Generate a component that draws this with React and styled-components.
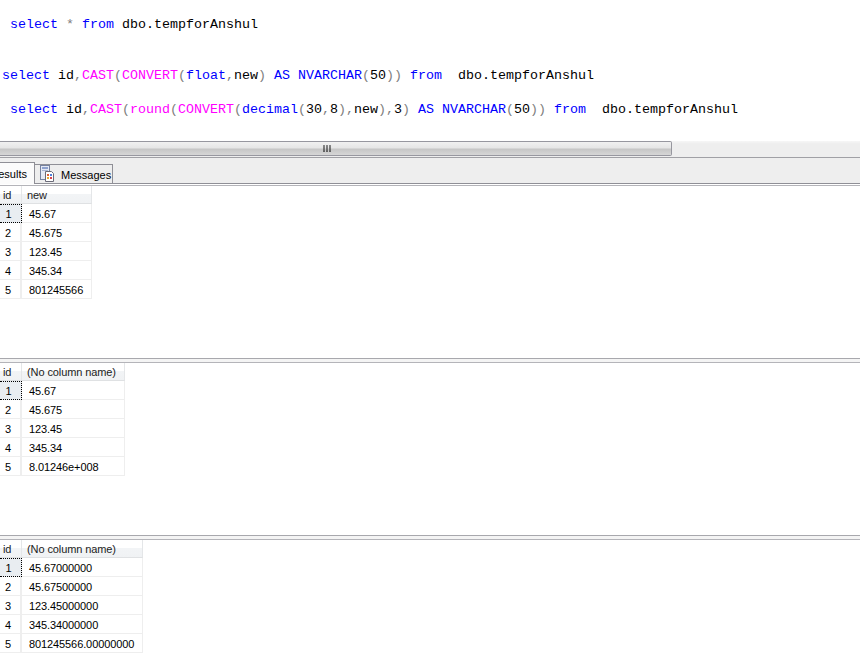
import React from 'react';
import styled, { createGlobalStyle } from 'styled-components';

const GlobalStyle = createGlobalStyle`
  html, body {
    margin: 0;
    padding: 0;
    background: #fff;
    overflow: hidden;
  }
`;

const Page = styled.div`
  width: 860px;
  height: 662px;
  overflow: hidden;
  display: flex;
  flex-direction: column;
  background: #fff;
`;

const Editor = styled.div`
  height: 141px;
  box-sizing: border-box;
  padding-top: 16px;
  font-family: "Liberation Mono", monospace;
  font-size: 13.33px;
  line-height: 17px;
  color: #000;
`;

const Line = styled.div`
  height: 17px;
  white-space: pre;
  padding-left: ${p => p.$indent}px;
  margin-bottom: ${p => p.$gap || 0}px;
`;

const Kw = styled.span`color: #0000ff;`;
const Fn = styled.span`color: #ff00ff;`;
const Op = styled.span`color: #808080;`;

const HScroll = styled.div`
  height: 16px;
  flex-shrink: 0;
  display: flex;
  align-items: flex-start;
  background: linear-gradient(#f6f6f6 0, #eeeeee 3px);
`;

const Thumb = styled.div`
  width: 672px;
  height: 15px;
  box-sizing: border-box;
  border: 1px solid #97979f;
  border-left: none;
  border-radius: 0 2px 2px 0;
  background: linear-gradient(#f1f1f1 0%, #e6e6e6 45%, #c6c6c6 55%, #d6d6d6 100%);
  display: flex;
  align-items: center;
  justify-content: center;
  gap: 1px;
  padding-right: 18px;
`;

const Grip = styled.span`
  width: 2px;
  height: 7px;
  background: linear-gradient(#8a8a8a, #5f5f5f);
`;

const TabStrip = styled.div`
  height: 27px;
  flex-shrink: 0;
  box-sizing: border-box;
  border-top: 1px solid #a0a0a5;
  border-bottom: 1px solid #8f8f96;
  background: #eeeeee;
  display: flex;
  align-items: flex-end;
  margin-bottom: 1px;
`;

const ResultsTab = styled.div`
  width: 35px;
  height: 22px;
  flex-shrink: 0;
  box-sizing: border-box;
  overflow: hidden;
  background: #fbfbfb;
  border: 1px solid #8f8f96;
  border-left: none;
  border-bottom: none;
  font: 11px "Liberation Sans", sans-serif;
  color: #000;
  display: flex;
  justify-content: flex-end;
  align-items: center;
  padding: 0 7px 0 0;
  position: relative;
  top: 1px;
  span {
    flex-shrink: 0;
  }
`;

const MessagesTab = styled.div`
  width: 78px;
  height: 19px;
  box-sizing: border-box;
  background: #eeeeee;
  border: 1px solid #8f8f96;
  border-left: none;
  border-bottom: none;
  font: 11px "Liberation Sans", sans-serif;
  color: #000;
  display: flex;
  align-items: center;
  padding: 2px 0 0 4px;
  gap: 6px;
  svg {
    flex-shrink: 0;
    margin-top: -3px;
  }
`;

const GridPane = styled.div`
  height: ${p => p.$height}px;
  flex-shrink: 0;
  box-sizing: border-box;
  border-top: 1px solid #b4b4b9;
`;

const Splitter = styled.div`
  height: 4px;
  flex-shrink: 0;
  box-sizing: border-box;
  border-top: 1px solid #a8a8ad;
  background: #f4f4f4;
`;

const Grid = styled.div`
  display: grid;
  grid-template-columns: 22px ${p => p.$col}px;
  width: ${p => p.$col + 22}px;
  font: 11px "Liberation Sans", sans-serif;
  letter-spacing: -0.1px;
  color: #000;
`;

const HeadCell = styled.div`
  height: 18px;
  box-sizing: border-box;
  padding: 1px 0 0 ${p => p.$left}px;
  line-height: 16px;
  white-space: nowrap;
  color: #1c1c1c;
  background: linear-gradient(#ffffff 0%, #ffffff 45%, #f2f4f6 50%, #f0f2f4 100%);
  border-right: 1px solid #e4e6e8;
  border-bottom: 1px solid #dfe1e3;
`;

const NumCell = styled.div`
  height: 19px;
  box-sizing: border-box;
  text-align: center;
  padding: 1px 4px 0 0;
  line-height: 18px;
  background: ${p => (p.$active ? '#e9edf1' : '#ffffff')};
  border-bottom: ${p => (p.$active ? '1px dotted #000' : '1px solid #eeeeee')};
  border-top: ${p => (p.$active ? '1px dotted #000' : 'none')};
  border-right: ${p => (p.$active ? '1px dotted #000' : '2px solid #eeeeee')};
  ${p => p.$active && 'line-height: 16px;'}
`;

const ValueCell = styled.div`
  height: 19px;
  box-sizing: border-box;
  padding: 1px 0 0 7px;
  line-height: 18px;
  white-space: nowrap;
  border-bottom: 1px solid #eeeeee;
  border-right: 1px solid #eeeeee;
`;

const MessagesIcon = () => (
  <svg width="16" height="17" viewBox="0 0 16 17">
    <rect x="1.5" y="0.5" width="9" height="14" fill="#e4e9f5" stroke="#76829f" />
    <rect x="3" y="2" width="6" height="2" fill="#8ea2cf" />
    <rect x="3" y="5" width="6" height="1" fill="#a9b6d4" />
    <path d="M6.5 6.5h6l2 2v8h-8z" fill="#fff" stroke="#6b6b78" />
    <rect x="8" y="9" width="2" height="2" fill="#e0603a" />
    <rect x="11" y="9" width="2" height="2" fill="#4f7fd9" />
    <rect x="8" y="12" width="2" height="2" fill="#e8a830" />
    <rect x="11" y="12" width="2" height="2" fill="#d9434f" />
  </svg>
);

const ResultGrid = ({ heading, col, rows }) => (
  <Grid $col={col}>
    <HeadCell $left={3}>id</HeadCell>
    <HeadCell $left={5}>{heading}</HeadCell>
    {rows.map((value, i) => (
      <React.Fragment key={i}>
        <NumCell $active={i === 0}>{i + 1}</NumCell>
        <ValueCell>{value}</ValueCell>
      </React.Fragment>
    ))}
  </Grid>
);

const App = () => (
  <Page>
    <GlobalStyle />
    <Editor>
      <Line $indent={10} $gap={34}>
        <Kw>select</Kw> <Op>*</Op> <Kw>from</Kw> dbo.tempforAnshul
      </Line>
      <Line $indent={2} $gap={17}>
        <Kw>select</Kw> id<Op>,</Op><Fn>CAST</Fn><Op>(</Op><Fn>CONVERT</Fn><Op>(</Op><Kw>float</Kw><Op>,</Op>new<Op>)</Op> <Kw>AS</Kw> <Kw>NVARCHAR</Kw><Op>(</Op>50<Op>))</Op> <Kw>from</Kw>  dbo.tempforAnshul
      </Line>
      <Line $indent={10}>
        <Kw>select</Kw> id<Op>,</Op><Fn>CAST</Fn><Op>(</Op><Fn>round</Fn><Op>(</Op><Fn>CONVERT</Fn><Op>(</Op><Kw>decimal</Kw><Op>(</Op>30<Op>,</Op>8<Op>),</Op>new<Op>),</Op>3<Op>)</Op> <Kw>AS</Kw> <Kw>NVARCHAR</Kw><Op>(</Op>50<Op>))</Op> <Kw>from</Kw>  dbo.tempforAnshul
      </Line>
    </Editor>
    <HScroll>
      <Thumb><Grip /><Grip /><Grip /></Thumb>
    </HScroll>
    <TabStrip>
      <ResultsTab><span>Results</span></ResultsTab>
      <MessagesTab><MessagesIcon />Messages</MessagesTab>
    </TabStrip>
    <GridPane $height={173}>
      <ResultGrid heading="new" col={70} rows={['45.67', '45.675', '123.45', '345.34', '801245566']} />
    </GridPane>
    <Splitter />
    <GridPane $height={173}>
      <ResultGrid heading="(No column name)" col={103} rows={['45.67', '45.675', '123.45', '345.34', '8.01246e+008']} />
    </GridPane>
    <Splitter />
    <GridPane $height={123}>
      <ResultGrid heading="(No column name)" col={121} rows={['45.67000000', '45.67500000', '123.45000000', '345.34000000', '801245566.00000000']} />
    </GridPane>
  </Page>
);

export default App;
